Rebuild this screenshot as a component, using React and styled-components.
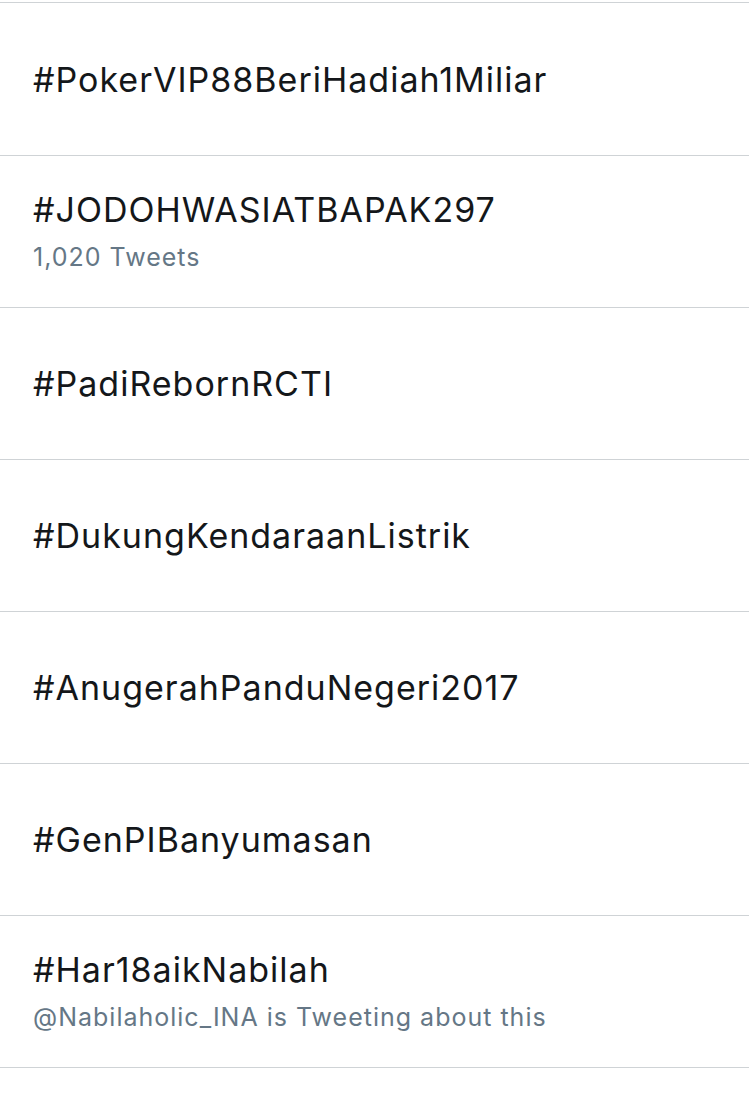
import styled, { createGlobalStyle } from "styled-components";

const GlobalStyle = createGlobalStyle`
  html, body {
    margin: 0;
    padding: 0;
    background: #ffffff;
  }
  body {
    font-family: Inter, "Noto Sans", "Liberation Sans", sans-serif;
    -webkit-font-smoothing: antialiased;
  }
`;

const trends = [
  { tag: "#PokerVIP88BeriHadiah1Miliar" },
  { tag: "#JODOHWASIATBAPAK297", meta: "1,020 Tweets" },
  { tag: "#PadiRebornRCTI" },
  { tag: "#DukungKendaraanListrik" },
  { tag: "#AnugerahPanduNegeri2017" },
  { tag: "#GenPIBanyumasan" },
  { tag: "#Har18aikNabilah", meta: "@Nabilaholic_INA is Tweeting about this" },
];

const List = styled.ul`
  list-style: none;
  margin: 2px 0 0;
  padding: 1px 0 0;
  border-top: 1px solid #cfd3d6;
`;

const Row = styled.li`
  display: flex;
  flex-direction: column;
  justify-content: center;
  height: 151px;
  padding: 0 33px;
  border-bottom: 1px solid #cfd3d6;
  box-sizing: content-box;
`;

const Tag = styled.div`
  font-size: 34px;
  line-height: 42px;
  color: #14171a;
  letter-spacing: 1px;
`;

const Meta = styled.div`
  margin-top: 9px;
  font-size: 25px;
  line-height: 34px;
  color: #657786;
  letter-spacing: 1px;
`;

export default function App() {
  return (
    <>
      <GlobalStyle />
      <List>
        {trends.map((t) => (
          <Row key={t.tag}>
            <Tag>{t.tag}</Tag>
            {t.meta && <Meta>{t.meta}</Meta>}
          </Row>
        ))}
      </List>
    </>
  );
}
